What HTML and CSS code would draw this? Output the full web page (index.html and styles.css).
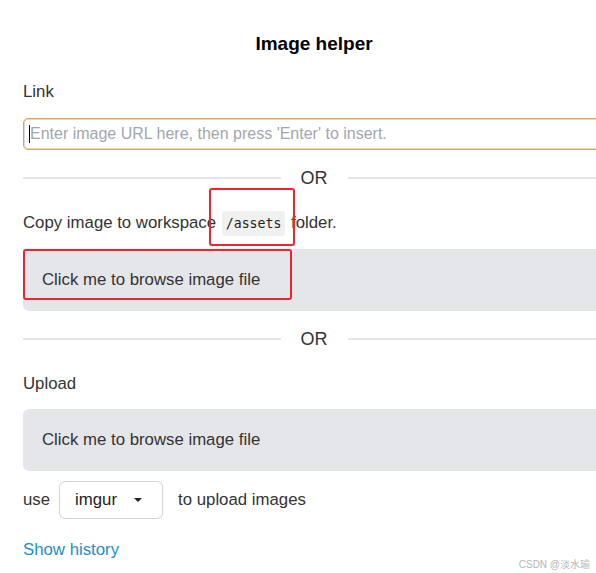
FILE: index.html
```html
<!DOCTYPE html>
<html>
<head>
<meta charset="utf-8">
<link rel="stylesheet" href="styles.css">
</head>
<body>
<div class="panel">
  <h2 class="title">Image helper</h2>
  <div class="label">Link</div>
  <div class="input">
    <span class="caret"></span><span class="placeholder">Enter image URL here, then press 'Enter' to insert.</span>
  </div>
  <div class="divider first"><span class="line"></span><span class="or">OR</span><span class="line"></span></div>
  <div class="copy">Copy image to workspace <code class="code">/assets</code> folder.</div>
  <div class="browse">Click me to browse image file</div>
  <div class="divider second"><span class="line"></span><span class="or">OR</span><span class="line"></span></div>
  <div class="label upload">Upload</div>
  <div class="browse">Click me to browse image file</div>
  <div class="use-row">
    <span>use</span>
    <div class="select"><span>imgur</span><span class="arrow"></span></div>
    <span>to upload images</span>
  </div>
  <div class="history">Show history</div>
</div>
<div class="mark mark-code"></div>
<div class="mark mark-browse"></div>
<div class="watermark">CSDN @淡水瑜</div>
</body>
</html>
```
FILE: styles.css
```css
html, body {
  margin: 0;
  padding: 0;
  background: #fff;
  overflow: hidden;
}
body {
  width: 596px;
  height: 573px;
  position: relative;
  font-family: "Liberation Sans", Arial, sans-serif;
  color: #333;
}
.panel {
  width: 582px;
  padding: 32px 0 0 23px;
  display: flex;
  flex-direction: column;
}
.title {
  margin: 0;
  font-size: 19px;
  line-height: 24px;
  font-weight: bold;
  color: #000;
  text-align: center;
}
.label {
  margin-top: 26px;
  font-size: 16.8px;
  line-height: 20px;
}
.input {
  margin-top: 16px;
  height: 32px;
  box-sizing: border-box;
  border: 1px solid #e6a23c;
  border-radius: 5px;
  box-shadow: inset 0 0 0 1px #d9d9d9;
  display: flex;
  align-items: center;
  padding-left: 5px;
}
.caret {
  width: 1px;
  height: 18px;
  background: #000;
}
.placeholder {
  font-size: 16px;
  color: #a2a6ae;
}
.divider {
  display: flex;
  align-items: center;
  height: 20px;
  margin-top: 18px;
}
.divider .line {
  flex: 1;
  height: 2px;
  background: #e6e6e6;
}
.divider .or {
  font-size: 18px;
  line-height: 20px;
  padding: 0 20px;
  color: #333;
}
.copy {
  margin-top: 23px;
  font-size: 16.8px;
  line-height: 24px;
}
.code {
  font-family: "DejaVu Sans Mono", "Liberation Mono", monospace;
  font-size: 13.2px;
  background: #f0f0f0;
  border-radius: 3px;
  padding: 5px 4px;
  margin: 0 1px;
  color: #222;
}
.browse {
  margin-top: 13px;
  height: 62px;
  background: #e5e6ea;
  border-radius: 6px;
  display: flex;
  align-items: center;
  padding-left: 19px;
  font-size: 16.8px;
  color: #333;
}
.divider.second {
  margin-top: 18px;
}
.label.upload {
  margin-top: 25px;
}
.upload + .browse {
  margin-top: 15px;
}
.use-row {
  margin-top: 10px;
  display: flex;
  align-items: center;
  font-size: 16.8px;
}
.select {
  width: 104px;
  height: 38px;
  box-sizing: border-box;
  border: 1px solid #d4d4d4;
  border-radius: 6px;
  margin: 0 15px 0 9px;
  display: flex;
  align-items: center;
  padding-left: 15px;
  color: #222;
}
.arrow {
  margin-left: 17px;
  width: 0;
  height: 0;
  border-left: 4px solid transparent;
  border-right: 4px solid transparent;
  border-top: 4px solid #222;
}
.history {
  margin-top: 21px;
  font-size: 16.8px;
  line-height: 20px;
  color: #1a8fd5;
}
.mark {
  position: absolute;
  border: 2px solid #f5222d;
  border-radius: 3px;
  box-sizing: border-box;
}
.mark-code {
  left: 209px;
  top: 188px;
  width: 86px;
  height: 58px;
}
.mark-browse {
  left: 23px;
  top: 249px;
  width: 269px;
  height: 51px;
}
.watermark {
  position: absolute;
  right: 6px;
  top: 556px;
  font-size: 10px;
  color: #b5b5b5;
  font-family: "Liberation Sans", "Noto Sans CJK SC", sans-serif;
}
```
